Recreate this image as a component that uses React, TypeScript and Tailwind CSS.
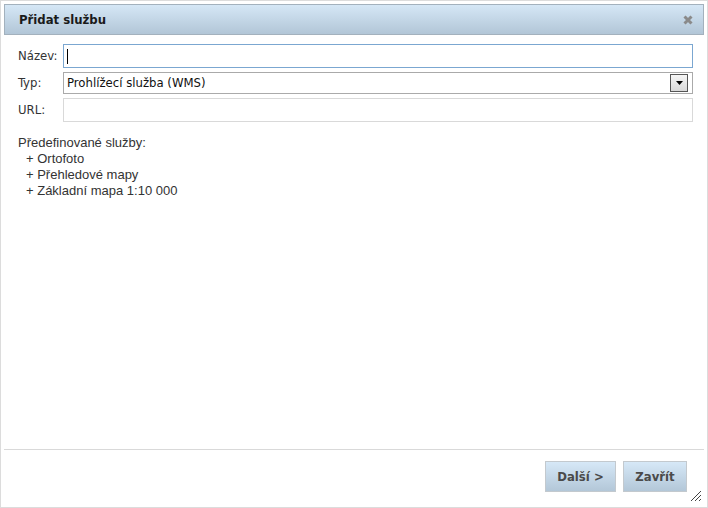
export default function App() {
    return (
        <div className="w-[708px] h-[508px] bg-white border border-[#dcdcdc] p-[3px] flex flex-col" style={{ fontFamily: '"DejaVu Sans Condensed", "DejaVu Sans", sans-serif' }}>
            {/* Title bar */}
            <div className="h-[31px] shrink-0 border border-[#a3b1bd] bg-gradient-to-b from-[#d5e7f6] to-[#b2c6d7] flex items-center justify-between pl-[14px] pr-[10px]">
                <span className="text-[13px] font-bold text-[#1a1a1a]">Přidat službu</span>
                <svg width="10" height="10" viewBox="0 0 10 10">
                    <path d="M1.5 1.5L8.5 8.5M8.5 1.5L1.5 8.5" stroke="#8a8a8a" strokeWidth="3" />
                </svg>
            </div>

            {/* Form */}
            <div className="flex-1 pl-[14px] pr-[11px] pt-[9px]">
                <div className="grid grid-cols-[45px_1fr] gap-y-[4px] items-center text-[13px] text-[#333]">
                    <label>Název:</label>
                    <div className="h-[24px] border border-[#7ba7d1] bg-white flex items-center pl-[3px]">
                        <span className="w-px h-[15px] bg-black" />
                    </div>
                    <label>Typ:</label>
                    <div className="h-[22px] border border-[#aaa] bg-white flex items-center justify-between pl-[3px] pr-[4px]">
                        <span className="text-[#111]">Prohlížecí služba (WMS)</span>
                        <span className="w-[18px] h-[18px] border border-[#555] bg-gradient-to-b from-[#f5f5f5] to-[#d8d8d8] flex items-center justify-center">
                            <svg width="7" height="4" viewBox="0 0 7 4"><path d="M0 0h7L3.5 4z" fill="#000" /></svg>
                        </span>
                    </div>
                    <label>URL:</label>
                    <div className="h-[24px] border border-[#d9d9d9] bg-white" />
                </div>

                <div className="mt-[13px] text-[13px] leading-[16px] text-[#333]" style={{ fontFamily: '"Liberation Sans", Arial, sans-serif' }}>
                    <div>Předefinované služby:</div>
                    <div className="pl-[8px]">+ Ortofoto</div>
                    <div className="pl-[8px]">+ Přehledové mapy</div>
                    <div className="pl-[8px]">+ Základní mapa 1:10 000</div>
                </div>
            </div>

            {/* Footer */}
            <div className="shrink-0 border-t border-[#d9d9d9] h-[55px] flex justify-end items-start pt-[11px] pr-[17px] gap-[7px] relative">
                <button className="h-[31px] w-[71px] border border-[#c3c9ce] bg-gradient-to-b from-[#d6e8f7] to-[#b3c7d8] text-[13px] font-bold text-[#4a4a4a]">Další &gt;</button>
                <button className="h-[31px] w-[64px] border border-[#c3c9ce] bg-gradient-to-b from-[#d6e8f7] to-[#b3c7d8] text-[13px] font-bold text-[#4a4a4a]">Zavřít</button>
                <svg className="absolute right-[2px] bottom-[2px]" width="12" height="12" viewBox="0 0 12 12">
                    <path d="M11 1L1 11M11 5L5 11M11 9L9 11" stroke="#444" strokeWidth="1" />
                </svg>
            </div>
        </div>
    );
}
